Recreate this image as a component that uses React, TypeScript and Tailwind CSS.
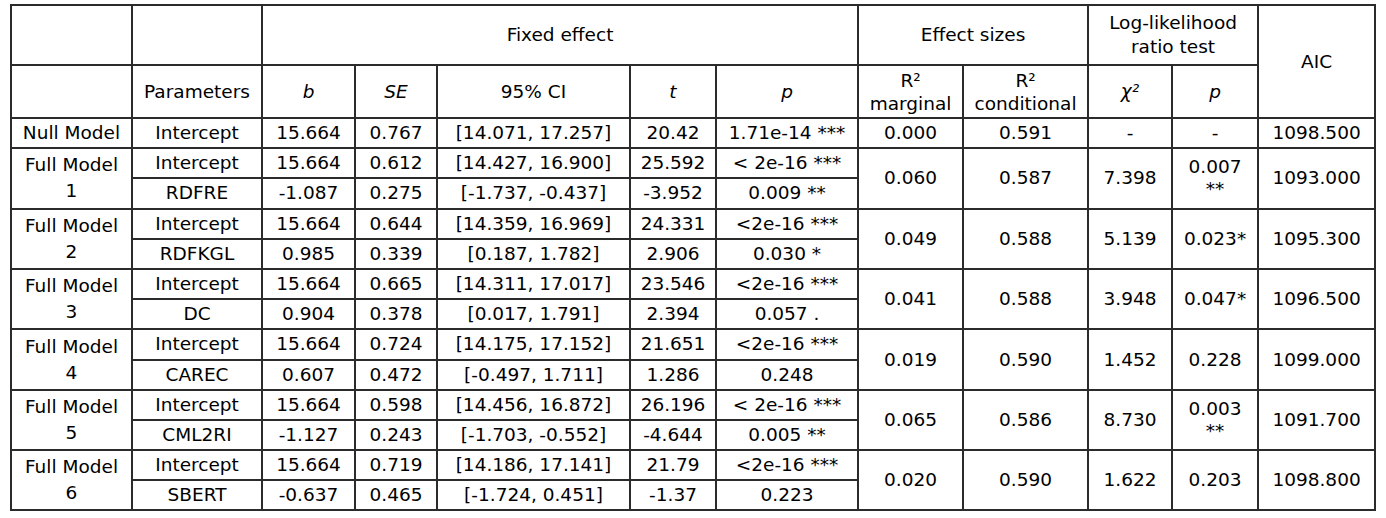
import React from 'react';

type SubRow = {
    param: string
    b: string
    se: string
    ci: string
    t: string
    p: string
}

type Model = {
    name: string
    num?: string
    rows: SubRow[]
    r2m: string
    r2c: string
    chi: string
    lrtP: string[]
    aic: string
}

const models: Model[] = [
    {
        name: 'Null Model',
        rows: [{ param: 'Intercept', b: '15.664', se: '0.767', ci: '[14.071, 17.257]', t: '20.42', p: '1.71e-14 ***' }],
        r2m: '0.000', r2c: '0.591', chi: '-', lrtP: ['-'], aic: '1098.500',
    },
    {
        name: 'Full Model', num: '1',
        rows: [
            { param: 'Intercept', b: '15.664', se: '0.612', ci: '[14.427, 16.900]', t: '25.592', p: '< 2e-16 ***' },
            { param: 'RDFRE', b: '-1.087', se: '0.275', ci: '[-1.737, -0.437]', t: '-3.952', p: '0.009 **' },
        ],
        r2m: '0.060', r2c: '0.587', chi: '7.398', lrtP: ['0.007', '**'], aic: '1093.000',
    },
    {
        name: 'Full Model', num: '2',
        rows: [
            { param: 'Intercept', b: '15.664', se: '0.644', ci: '[14.359, 16.969]', t: '24.331', p: '<2e-16 ***' },
            { param: 'RDFKGL', b: '0.985', se: '0.339', ci: '[0.187, 1.782]', t: '2.906', p: '0.030 *' },
        ],
        r2m: '0.049', r2c: '0.588', chi: '5.139', lrtP: ['0.023*'], aic: '1095.300',
    },
    {
        name: 'Full Model', num: '3',
        rows: [
            { param: 'Intercept', b: '15.664', se: '0.665', ci: '[14.311, 17.017]', t: '23.546', p: '<2e-16 ***' },
            { param: 'DC', b: '0.904', se: '0.378', ci: '[0.017, 1.791]', t: '2.394', p: '0.057 .' },
        ],
        r2m: '0.041', r2c: '0.588', chi: '3.948', lrtP: ['0.047*'], aic: '1096.500',
    },
    {
        name: 'Full Model', num: '4',
        rows: [
            { param: 'Intercept', b: '15.664', se: '0.724', ci: '[14.175, 17.152]', t: '21.651', p: '<2e-16 ***' },
            { param: 'CAREC', b: '0.607', se: '0.472', ci: '[-0.497, 1.711]', t: '1.286', p: '0.248' },
        ],
        r2m: '0.019', r2c: '0.590', chi: '1.452', lrtP: ['0.228'], aic: '1099.000',
    },
    {
        name: 'Full Model', num: '5',
        rows: [
            { param: 'Intercept', b: '15.664', se: '0.598', ci: '[14.456, 16.872]', t: '26.196', p: '< 2e-16 ***' },
            { param: 'CML2RI', b: '-1.127', se: '0.243', ci: '[-1.703, -0.552]', t: '-4.644', p: '0.005 **' },
        ],
        r2m: '0.065', r2c: '0.586', chi: '8.730', lrtP: ['0.003', '**'], aic: '1091.700',
    },
    {
        name: 'Full Model', num: '6',
        rows: [
            { param: 'Intercept', b: '15.664', se: '0.719', ci: '[14.186, 17.141]', t: '21.79', p: '<2e-16 ***' },
            { param: 'SBERT', b: '-0.637', se: '0.465', ci: '[-1.724, 0.451]', t: '-1.37', p: '0.223' },
        ],
        r2m: '0.020', r2c: '0.590', chi: '1.622', lrtP: ['0.203'], aic: '1098.800',
    },
]

const cell = 'border-2 border-[#2b2b2b] text-center align-middle p-0'

const App = () => {
    return (
        <div className="w-[1386px] h-[518px] bg-white pt-[4px] pl-[10px] text-black text-[18.5px] leading-[22px] font-['DejaVu_Sans',sans-serif]">
            <table className="table-fixed border-collapse border-2 border-[#111] w-[1364px]">
                <colgroup>
                    <col className="w-[121px]" />
                    <col className="w-[130px]" />
                    <col className="w-[93px]" />
                    <col className="w-[82px]" />
                    <col className="w-[193px]" />
                    <col className="w-[86px]" />
                    <col className="w-[142px]" />
                    <col className="w-[105px]" />
                    <col className="w-[125px]" />
                    <col className="w-[84px]" />
                    <col className="w-[86px]" />
                    <col className="w-[117px]" />
                </colgroup>
                <thead>
                    <tr className="h-[60px]">
                        <th className={cell}></th>
                        <th className={cell}></th>
                        <th colSpan={5} className={`${cell} font-normal`}>Fixed effect</th>
                        <th colSpan={2} className={`${cell} font-normal`}>Effect sizes</th>
                        <th colSpan={2} className={`${cell} font-normal leading-[24px]`}>Log-likelihood<br />ratio test</th>
                        <th rowSpan={2} className={`${cell} font-normal`}>AIC</th>
                    </tr>
                    <tr className="h-[53px]">
                        <th className={cell}></th>
                        <th className={`${cell} font-normal`}>Parameters</th>
                        <th className={`${cell} font-normal italic`}>b</th>
                        <th className={`${cell} font-normal italic`}>SE</th>
                        <th className={`${cell} font-normal`}>95% CI</th>
                        <th className={`${cell} font-normal italic`}>t</th>
                        <th className={`${cell} font-normal italic`}>p</th>
                        <th className={`${cell} font-normal leading-[23px]`}>R²<br />marginal</th>
                        <th className={`${cell} font-normal leading-[23px]`}>R²<br />conditional</th>
                        <th className={`${cell} font-normal italic`}>χ²</th>
                        <th className={`${cell} font-normal italic`}>p</th>
                    </tr>
                </thead>
                <tbody>
                    {models.map((m, mi) =>
                        m.rows.map((r, ri) => (
                            <tr key={`${mi}-${ri}`} className="h-[30.2px]">
                                {ri === 0 && (
                                    <td rowSpan={m.rows.length} className={`${cell} leading-[26px]`}>
                                        {m.name}
                                        {m.num && <><br />{m.num}</>}
                                    </td>
                                )}
                                <td className={cell}>{r.param}</td>
                                <td className={cell}>{r.b}</td>
                                <td className={cell}>{r.se}</td>
                                <td className={cell}>{r.ci}</td>
                                <td className={cell}>{r.t}</td>
                                <td className={cell}>{r.p}</td>
                                {ri === 0 && (
                                    <>
                                        <td rowSpan={m.rows.length} className={cell}>{m.r2m}</td>
                                        <td rowSpan={m.rows.length} className={cell}>{m.r2c}</td>
                                        <td rowSpan={m.rows.length} className={cell}>{m.chi}</td>
                                        <td rowSpan={m.rows.length} className={cell}>
                                            {m.lrtP.map((s, si) => (
                                                <div key={si}>{s}</div>
                                            ))}
                                        </td>
                                        <td rowSpan={m.rows.length} className={cell}>{m.aic}</td>
                                    </>
                                )}
                            </tr>
                        ))
                    )}
                </tbody>
            </table>
        </div>
    );
}

export default App;
